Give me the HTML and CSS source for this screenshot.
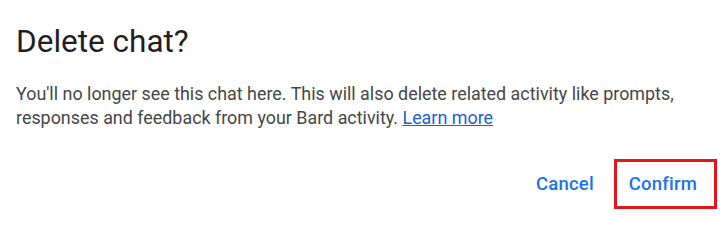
FILE: index.html
```html
<!DOCTYPE html>
<html>
<head>
<meta charset="utf-8">
<link rel="stylesheet" href="styles.css">
</head>
<body>
<div class="dialog">
  <h1 class="title">Delete chat?</h1>
  <p class="message">You'll no longer see this chat here. This will also delete related activity like prompts, responses and feedback from your Bard activity. <a class="link" href="#">Learn more</a></p>
  <div class="actions">
    <button class="btn">Cancel</button>
    <button class="btn btn-marked">Confirm</button>
  </div>
</div>
</body>
</html>
```

FILE: styles.css
```css
html, body {
  margin: 0;
  padding: 0;
  background: #ffffff;
}
.dialog {
  width: 723px;
  height: 229px;
  box-sizing: border-box;
  padding: 24px 6px 0 16px;
  font-family: Roboto, "Noto Sans", Arial, sans-serif;
}
.title {
  margin: 0;
  font-size: 31.5px;
  font-weight: 400;
  line-height: 36px;
  color: #1f1f1f;
}
.message {
  margin: 22px 0 0 0;
  font-size: 17.9px;
  line-height: 24px;
  color: #444746;
  padding-right: 10px;
}
.link {
  color: #1a5fd0;
  text-decoration: underline;
}
.actions {
  display: flex;
  justify-content: flex-end;
  align-items: center;
  margin-top: 29px;
}
.btn {
  font-family: Roboto, "Noto Sans", Arial, sans-serif;
  font-size: 18.5px;
  font-weight: 500;
  letter-spacing: 0.2px;
  color: #1a73e8;
  background: none;
  border: 3px solid transparent;
  height: 50px;
  padding: 0 17px 0 12px;
  cursor: pointer;
}
.btn-marked {
  border-color: #e5141b;
}
```
